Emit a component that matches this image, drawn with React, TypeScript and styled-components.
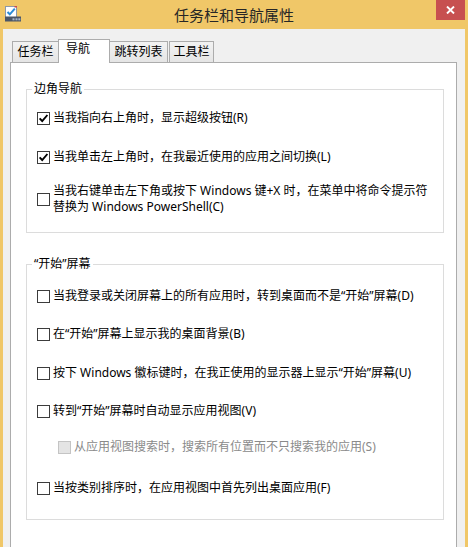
import React from "react";
import styled, { createGlobalStyle } from "styled-components";

const GlobalStyle = createGlobalStyle`
  html, body {
    margin: 0;
    padding: 0;
    overflow: hidden;
  }
  body {
    font-family: "Noto Sans", "Noto Sans CJK SC", sans-serif;
    font-size: 12px;
    color: #000;
  }
`;

type Option = {
  label: React.ReactNode;
  checked?: boolean;
  disabled?: boolean;
  indent?: number;
  gap: number;
};

const cornerOptions: Option[] = [
  { label: "当我指向右上角时，显示超级按钮(R)", checked: true, gap: 13 },
  { label: "当我单击左上角时，在我最近使用的应用之间切换(L)", checked: true, gap: 23 },
  {
    label: (
      <>
        当我右键单击左下角或按下 Windows 键+X 时，在菜单中将命令提示符
        <br />
        替换为 Windows PowerShell(C)
      </>
    ),
    gap: 18,
  },
];

const startOptions: Option[] = [
  { label: "当我登录或关闭屏幕上的所有应用时，转到桌面而不是“开始”屏幕(D)", gap: 16 },
  { label: "在“开始”屏幕上显示我的桌面背景(B)", gap: 22 },
  { label: "按下 Windows 徽标键时，在我正使用的显示器上显示“开始”屏幕(U)", gap: 23 },
  { label: "转到“开始”屏幕时自动显示应用视图(V)", gap: 22 },
  { label: "从应用视图搜索时，搜索所有位置而不只搜索我的应用(S)", disabled: true, indent: 21, gap: 20 },
  { label: "当按类别排序时，在应用视图中首先列出桌面应用(F)", gap: 25 },
];

const tabs = [
  { label: "任务栏", width: 47, offset: 0 },
  { label: "导航", width: 52, offset: -1, active: true },
  { label: "跳转列表", width: 59, offset: -1 },
  { label: "工具栏", width: 45, offset: 1 },
];

function WindowIcon() {
  return (
    <svg width="16" height="16" viewBox="0 0 16 16">
      <rect x="0.5" y="0.5" width="11" height="11" fill="#fff" stroke="#8c99aa" />
      <rect x="9.5" y="0" width="2.5" height="1.5" fill="#d04848" />
      <path d="M2.5 6 L4.8 8.3 L9.8 2.6" fill="none" stroke="#2b8bd6" strokeWidth="2" />
      <rect x="0" y="10.5" width="16" height="5" fill="#4b5668" />
      <rect x="7.5" y="12.3" width="2" height="2" fill="#a8b6c8" />
      <rect x="10.5" y="12.3" width="2" height="2" fill="#a8b6c8" />
      <rect x="13.3" y="12.3" width="2" height="2" fill="#a8b6c8" />
    </svg>
  );
}

function CheckBox({ checked, disabled }: { checked?: boolean; disabled?: boolean }) {
  return (
    <Box $disabled={disabled}>
      {checked && (
        <svg width="11" height="11" viewBox="0 0 11 11">
          <path d="M1.6 5.4 L4.2 8 L9.4 2" fill="none" stroke="#000" strokeWidth="1.9" />
        </svg>
      )}
    </Box>
  );
}

function Group({ title, options, bottom }: { title: string; options: Option[]; bottom: number }) {
  return (
    <Fieldset>
      <Legend>{title}</Legend>
      <GroupBody $bottom={bottom}>
        {options.map((o, i) => (
          <Row key={i} $gap={o.gap} $indent={o.indent ?? 0}>
            <CheckBox checked={o.checked} disabled={o.disabled} />
            <Label $disabled={o.disabled}>{o.label}</Label>
          </Row>
        ))}
      </GroupBody>
    </Fieldset>
  );
}

function App() {
  return (
    <Window>
      <GlobalStyle />
      <TitleBar>
        <IconCell>
          <WindowIcon />
        </IconCell>
        <Title>任务栏和导航属性</Title>
        <CloseCell>
          <CloseButton>
            <svg width="9" height="8" viewBox="0 0 9 8">
              <path d="M1 0.5 L8 7.5 M8 0.5 L1 7.5" stroke="#fff" strokeWidth="1.9" />
            </svg>
          </CloseButton>
        </CloseCell>
      </TitleBar>
      <Client>
        <TabStrip>
          {tabs.map((t) => (
            <Tab key={t.label} $active={t.active} $width={t.width} $offset={t.offset}>
              {t.label}
            </Tab>
          ))}
        </TabStrip>
        <Panel>
          <Group title="边角导航" options={cornerOptions} bottom={17} />
          <Spacer />
          <Group title="“开始”屏幕" options={startOptions} bottom={23} />
        </Panel>
      </Client>
    </Window>
  );
}

const Window = styled.div`
  width: 468px;
  height: 547px;
  background-color: #f0c768;
  display: flex;
  flex-direction: column;
  overflow: hidden;
`;

const TitleBar = styled.div`
  height: 29px;
  flex-shrink: 0;
  display: grid;
  grid-template-columns: 1fr auto 1fr;
`;

const IconCell = styled.div`
  padding: 6px 0 0 5px;
  svg {
    display: block;
  }
`;

const Title = styled.div`
  font-family: "Noto Sans CJK SC", sans-serif;
  font-size: 15px;
  line-height: 20px;
  padding-top: 5px;
  color: #262626;
`;

const CloseCell = styled.div`
  display: flex;
  justify-content: flex-end;
  align-items: flex-start;
  padding-right: 3px;
`;

const CloseButton = styled.div`
  width: 29px;
  height: 20px;
  background-color: #c75050;
  display: flex;
  align-items: center;
  justify-content: center;
  svg {
    display: block;
  }
`;

const Client = styled.div`
  flex: 1;
  margin: 0 3px;
  background-color: #f0f0f0;
  padding-top: 10px;
  overflow: hidden;
`;

const TabStrip = styled.div`
  display: flex;
  align-items: flex-end;
  margin-left: 9px;
  height: 23px;
`;

const Tab = styled.div<{ $active?: boolean; $width: number; $offset: number }>`
  box-sizing: border-box;
  width: ${(p) => p.$width}px;
  margin-left: ${(p) => p.$offset}px;
  height: ${(p) => (p.$active ? 24 : 21)}px;
  margin-bottom: ${(p) => (p.$active ? -1 : 0)}px;
  border: 1px solid #acacac;
  border-bottom: none;
  background: ${(p) => (p.$active ? "#fff" : "linear-gradient(#f2f2f2, #e5e5e5)")};
  position: relative;
  z-index: ${(p) => (p.$active ? 2 : 1)};
  display: flex;
  justify-content: ${(p) => (p.$active ? "flex-start" : "center")};
  align-items: ${(p) => (p.$active ? "flex-start" : "center")};
  padding: ${(p) => (p.$active ? "1px 0 0 7px" : "0")};
  line-height: 16px;
  font-size: 12px;
`;

const Panel = styled.div`
  margin: 0 8px 0 7px;
  height: 500px;
  background-color: #fff;
  border: 1px solid #acacac;
  padding: 18px 12px 0 15px;
`;

const Spacer = styled.div`
  height: 23px;
`;

const Fieldset = styled.fieldset`
  margin: 0;
  padding: 0;
  border: 1px solid #dcdcdc;
  min-width: 0;
`;

const Legend = styled.legend`
  margin-left: 5px;
  padding: 0 2px;
  line-height: 16px;
  font-size: 12px;
`;

const GroupBody = styled.div<{ $bottom: number }>`
  display: flex;
  flex-direction: column;
  padding: 0 8px ${(p) => p.$bottom}px 10px;
`;

const Row = styled.div<{ $gap: number; $indent: number }>`
  display: flex;
  align-items: center;
  margin-top: ${(p) => p.$gap}px;
  margin-left: ${(p) => p.$indent}px;
`;

const Box = styled.span<{ $disabled?: boolean }>`
  box-sizing: border-box;
  width: 13px;
  height: 13px;
  flex-shrink: 0;
  border: 1px solid ${(p) => (p.$disabled ? "#c4c4c4" : "#3c3c3c")};
  background-color: ${(p) => (p.$disabled ? "#e4e4e4" : "#fff")};
  margin-right: 3px;
  svg {
    display: block;
  }
`;

const Label = styled.span<{ $disabled?: boolean }>`
  line-height: 16px;
  white-space: nowrap;
  color: ${(p) => (p.$disabled ? "#8a8a8a" : "#000")};
`;

export default App;
